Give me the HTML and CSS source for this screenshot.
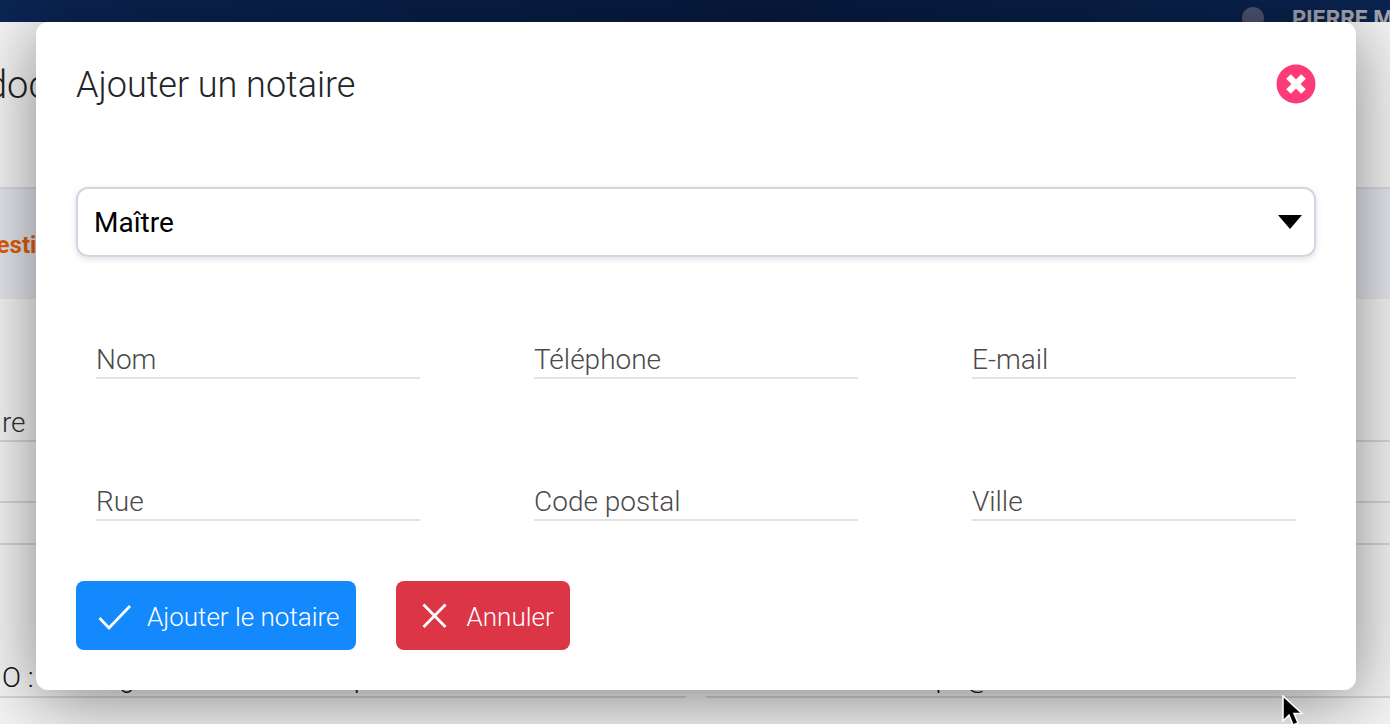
FILE: index.html
```html
<!DOCTYPE html>
<html lang="fr">

<head>
    <meta charset="UTF-8">
    <meta name="viewport" content="width=device-width, initial-scale=1.0">
    <title>Ajouter un notaire</title>
    <link rel="stylesheet" href="styles.css">
</head>

<body>
    <div class="page">
        <div class="navbar">
            <span class="avatar"></span>
            <span class="user-name">PIERRE MARTIN</span>
        </div>
        <div class="page-title">documents</div>
        <div class="band"><span class="band-text">Destinataire</span></div>
        <div class="row row-label">Notaire</div>
        <div class="row row-empty-a"></div>
        <div class="row row-empty-b"></div>
        <div class="row-split">
            <div class="split-left"><span class="split-label">O :</span><span class="split-value">Legrand et Martini Dupont</span></div>
            <div class="split-right">m.dupe@etude.fr</div>
        </div>
    </div>

    <div class="modal">
        <div class="modal-head">
            <h2 class="modal-title">Ajouter un notaire</h2>
            <svg class="close-icon" viewBox="0 0 40 40">
                <circle cx="20" cy="20" r="19.5" fill="#fc3b78" />
                <path d="M12.5 12.5L27.5 27.5M27.5 12.5L12.5 27.5" stroke="#fff" stroke-width="6.5" />
            </svg>
        </div>

        <div class="select-box">
            <span>Maître</span>
            <svg class="select-arrow" viewBox="0 0 24 14">
                <path d="M0 0H24L12 14Z" fill="#000" />
            </svg>
        </div>

        <div class="fields">
            <input class="field" type="text" placeholder="Nom">
            <input class="field" type="text" placeholder="Téléphone">
            <input class="field" type="text" placeholder="E-mail">
            <input class="field" type="text" placeholder="Rue">
            <input class="field" type="text" placeholder="Code postal">
            <input class="field" type="text" placeholder="Ville">
        </div>

        <div class="actions">
            <button class="btn btn-blue" type="button">
                <svg class="btn-icon" viewBox="0 0 40 30">
                    <path d="M7.5 17L17 27L38 5" stroke="#fff" stroke-width="2.800" fill="none" />
                </svg>
                <span class="btn-text">Ajouter le notaire</span>
            </button>
            <button class="btn btn-red" type="button">
                <svg class="btn-icon" viewBox="0 0 40 30">
                    <path d="M11.5 3.5L33.5 26M33.5 3.5L11.5 26" stroke="#fff" stroke-width="2.800" fill="none" />
                </svg>
                <span class="btn-text">Annuler</span>
            </button>
        </div>
    </div>

    <svg class="cursor" viewBox="0 0 24 34">
        <path d="M2 1V26L8 20L12 30L17 28L13 18.500H21Z" fill="#000" stroke="#fff" stroke-width="1.500" />
    </svg>
</body>

</html>
```

FILE: styles.css
```css
html,
body {
    margin: 0;
    padding: 0;
    height: 724px;
    overflow: hidden;
}

body {
    position: relative;
    font-family: Roboto, "Liberation Sans", sans-serif;
    background-color: #f4f4f4;
}

.page {
    height: 724px;
    overflow: hidden;
}

.navbar {
    display: flex;
    align-items: flex-start;
    height: 22px;
    padding: 7px 0 0 1242px;
    box-sizing: border-box;
    overflow: hidden;
    white-space: nowrap;
    background: linear-gradient(90deg, #0b2553, #071a40 55%, #0b2450);
}

.avatar {
    flex: none;
    width: 22px;
    height: 22px;
    border-radius: 50%;
    background-color: #4a5571;
}

.user-name {
    margin: -2px 0 0 28px;
    font-family: Inter, "Open Sans", sans-serif;
    font-size: 22px;
    line-height: 26px;
    font-weight: 700;
    color: #a2a6af;
}

.page-title {
    height: 165px;
    box-sizing: border-box;
    padding: 43px 0 0 0;
    margin-left: -14px;
    font-size: 38px;
    line-height: 40px;
    font-weight: 300;
    color: #222;
}

.band {
    height: 112px;
    box-sizing: border-box;
    padding-top: 40px;
    border-top: 2px solid #d8d9df;
    background-color: #e4e6ec;
    overflow: hidden;
}

.band-text {
    display: block;
    margin-left: -19px;
    font-size: 24px;
    line-height: 32px;
    font-weight: 700;
    color: #e35f08;
}

.row {
    box-sizing: border-box;
    border-bottom: 2px solid #d6d6d6;
}

.row-label {
    height: 143px;
    padding-top: 108px;
    margin-left: -64px;
    font-size: 28px;
    line-height: 32px;
    font-weight: 300;
    color: #333;
}

.row-empty-a {
    height: 61px;
}

.row-empty-b {
    height: 42px;
}

.row-split {
    display: flex;
    gap: 20px;
    height: 153px;
    font-size: 28px;
    line-height: 32px;
    font-weight: 300;
    color: #111;
}

.split-left,
.split-right {
    height: 153px;
    box-sizing: border-box;
    padding-top: 117px;
    border-bottom: 2px solid #d6d6d6;
    white-space: nowrap;
    overflow: hidden;
}

.split-left {
    display: flex;
    width: 686px;
    padding-left: 2px;
}

.split-right {
    flex: 1;
    padding-left: 167px;
}

.split-label {
    width: 88px;
}

.modal {
    position: absolute;
    left: 36px;
    top: 22px;
    width: 1320px;
    box-sizing: border-box;
    padding: 42px 40px 40px;
    border-radius: 12px;
    background-color: #fff;
    box-shadow: 0 10px 70px rgba(0, 0, 0, 0.46);
}

.modal-head {
    display: flex;
    align-items: center;
    justify-content: space-between;
    height: 40px;
}

.modal-title {
    margin: 2px 0 0;
    font-size: 36px;
    line-height: 40px;
    font-weight: 300;
    color: #212529;
}

.close-icon {
    width: 40px;
    height: 40px;
}

.select-box {
    display: flex;
    align-items: center;
    justify-content: space-between;
    height: 70px;
    box-sizing: border-box;
    margin-top: 83px;
    padding: 0 12px 0 16px;
    border: 2px solid #d2d5e0;
    border-radius: 12px;
    box-shadow: 0 2px 6px rgba(120, 125, 150, 0.25);
    font-size: 28px;
    color: #000;
}

.select-arrow {
    width: 24px;
    height: 14px;
}

.fields {
    display: grid;
    grid-template-columns: repeat(3, 324px);
    column-gap: 114px;
    row-gap: 102px;
    margin-top: 82px;
    padding: 0 20px;
}

.field {
    width: 100%;
    height: 40px;
    box-sizing: border-box;
    padding: 2px 0 0;
    border: 0;
    border-bottom: 2px solid #e3e3e3;
    outline: none;
    font-family: inherit;
    font-size: 28px;
    font-weight: 300;
}

.field::placeholder {
    color: #4a4a4a;
    opacity: 1;
}

.actions {
    display: flex;
    gap: 40px;
    margin-top: 60px;
}

.btn {
    display: flex;
    align-items: center;
    gap: 15px;
    height: 69px;
    padding: 0 16px;
    border: 0;
    border-radius: 8px;
    font-family: inherit;
    font-size: 26px;
    font-weight: 300;
    color: #fff;
}

.btn-text {
    padding-top: 2px;
}

.btn-blue {
    background-color: #1389fd;
}

.btn-red {
    background-color: #dc3545;
}

.btn-icon {
    flex: none;
    width: 40px;
    height: 30px;
}

.cursor {
    position: absolute;
    left: 1281px;
    top: 695px;
    width: 24px;
    height: 34px;
}
```
